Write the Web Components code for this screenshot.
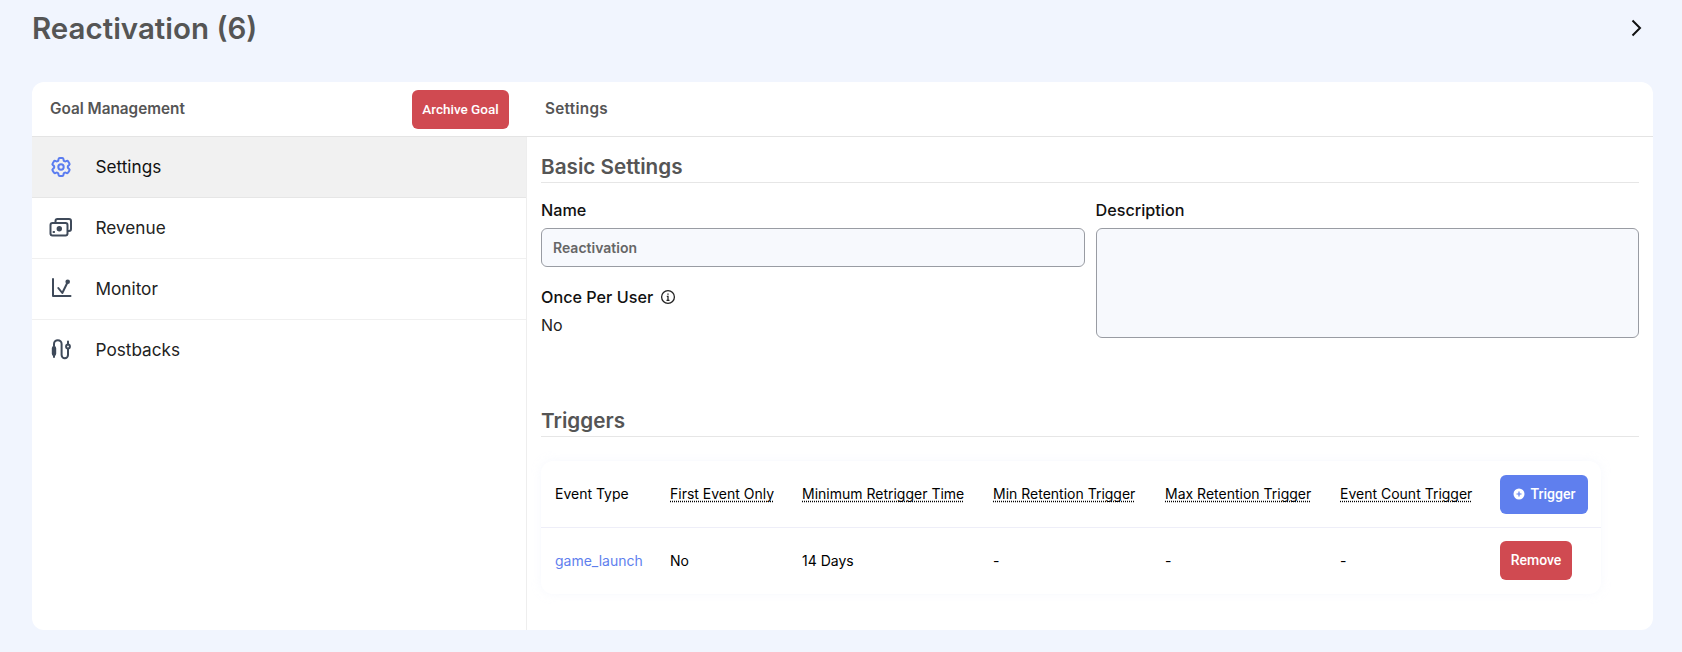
<!DOCTYPE html>
<html>
<head>
<meta charset="utf-8">
<title>Reactivation</title>
<style>
html, body { margin: 0; background: #f1f5fe; }
body { font-family: Inter, "Liberation Sans", sans-serif; width: 1682px; height: 652px; overflow: hidden; }
</style>
</head>
<body>
<goal-page>
    <page-title slot="title">Reactivation (6)</page-title>
    <goal-card>
        <card-bar slot="bar"></card-bar>
        <side-nav slot="nav">
            <nav-item icon="gear" active>Settings</nav-item>
            <nav-item icon="cash">Revenue</nav-item>
            <nav-item icon="chart">Monitor</nav-item>
            <nav-item icon="cable" last>Postbacks</nav-item>
        </side-nav>
        <basic-settings></basic-settings>
        <section-title style="margin-top:68px">Triggers</section-title>
        <trigger-table></trigger-table>
    </goal-card>
</goal-page>

<script>
const ICONS = {
    gear: `<path d="M9.594 3.940c.09-.542.56-.94 1.110-.94h2.593c.55 0 1.020.398 1.110.94l.213 1.281c.063.374.313.686.645.87.074.04.147.083.22.127.325.196.72.257 1.075.124l1.217-.456a1.125 1.125 0 0 1 1.370.49l1.296 2.247a1.125 1.125 0 0 1-.26 1.431l-1.003.827c-.293.241-.438.613-.43.992a7.723 7.723 0 0 1 0 .255c-.008.378.137.75.43.991l1.004.827c.424.35.534.955.26 1.430l-1.298 2.247a1.125 1.125 0 0 1-1.369.491l-1.217-.456c-.355-.133-.75-.072-1.076.124a6.470 6.470 0 0 1-.22.128c-.331.183-.581.495-.644.869l-.213 1.281c-.09.543-.56.94-1.110.94h-2.594c-.55 0-1.019-.398-1.110-.94l-.213-1.281c-.062-.374-.312-.686-.644-.87a6.520 6.520 0 0 1-.22-.127c-.325-.196-.72-.257-1.076-.124l-1.217.456a1.125 1.125 0 0 1-1.369-.49l-1.297-2.247a1.125 1.125 0 0 1 .26-1.431l1.004-.827c.292-.24.437-.613.43-.991a6.932 6.932 0 0 1 0-.255c.007-.38-.138-.751-.43-.992l-1.004-.827a1.125 1.125 0 0 1-.26-1.430l1.297-2.247a1.125 1.125 0 0 1 1.370-.491l1.216.456c.356.133.751.072 1.076-.124.072-.044.146-.086.22-.128.332-.183.582-.495.644-.869l.214-1.280Z"/><path d="M14.700 12a2.700 2.700 0 1 1-5.400 0 2.700 2.700 0 0 1 5.400 0Z"/>`,
    cash: `<path d="M6.500 7V5a2 2 0 0 1 2-2H20a2 2 0 0 1 2 2v8a2 2 0 0 1-2 2h-1"/><rect x="1.500" y="7" width="17" height="12.500" rx="2"/><circle cx="10.300" cy="12.800" r="1.700" fill="currentColor"/><path d="M4.500 16h.6"/>`,
    chart: `<path d="M4 2v17h17.500"/><path d="M9.300 11l4 5 5.400-11"/><circle cx="18.700" cy="4.700" r="1.300" fill="currentColor"/>`,
    cable: `<path d="M5 8V6a3.800 3.800 0 0 1 7.600 0v11a3.200 3.200 0 0 0 6.400 0v-6"/><rect x="3.800" y="9" width="2.400" height="8" rx="1.200" fill="currentColor"/><circle cx="19" cy="8.500" r="1.900"/><path d="M5 17v2M19 3.500v3"/>`
};

class GoalPage extends HTMLElement {
    connectedCallback() {
        this.attachShadow({mode: 'open'});
        this.shadowRoot.innerHTML = `
        <style>
        :host { display: block; padding: 0 29px 23px 32px; }
        header {
            display: flex;
            align-items: center;
            justify-content: space-between;
            height: 56px;
            margin-bottom: 26px;
        }
        svg { margin-right: 5px; }
        </style>
        <header>
            <slot name="title"></slot>
            <svg width="24" height="24" viewBox="0 0 24 24" fill="none" stroke="#111" stroke-width="2"><path d="M8.500 4.500 16 12l-7.500 7.500"/></svg>
        </header>
        <slot></slot>
        `;
    }
}

class PageTitle extends HTMLElement {
    connectedCallback() {
        this.attachShadow({mode: 'open'});
        this.shadowRoot.innerHTML = `
        <style>
        :host { display: block; font-size: 29.500px; font-weight: 600; color: #555; }
        </style>
        <slot></slot>
        `;
    }
}

class GoalCard extends HTMLElement {
    connectedCallback() {
        this.attachShadow({mode: 'open'});
        this.shadowRoot.innerHTML = `
        <style>
        :host {
            display: block;
            height: 548px;
            background: #fff;
            border-radius: 12px;
            overflow: hidden;
        }
        .body { display: grid; grid-template-columns: 494px 1fr; height: 493px; }
        .main { border-left: 1px solid #eee; padding: 15px 14px 0 14px; }
        </style>
        <slot name="bar"></slot>
        <div class="body">
            <slot name="nav"></slot>
            <div class="main"><slot></slot></div>
        </div>
        `;
    }
}

class CardBar extends HTMLElement {
    connectedCallback() {
        this.attachShadow({mode: 'open'});
        this.shadowRoot.innerHTML = `
        <style>
        :host {
            display: grid;
            grid-template-columns: 362px auto 1fr;
            align-items: center;
            height: 54px;
            border-bottom: 1px solid #e4e4e4;
            padding-left: 18px;
            font-size: 15.300px;
            font-weight: 600;
            color: #555;
        }
        span { margin-bottom: 2px; }
        span:last-child { margin-left: 36px; letter-spacing: .3px; }
        </style>
        <span>Goal Management</span>
        <ui-button color="#d04a51" w="97" size="13.500">Archive Goal</ui-button>
        <span>Settings</span>
        `;
    }
}

class SideNav extends HTMLElement {
    connectedCallback() {
        this.attachShadow({mode: 'open'});
        this.shadowRoot.innerHTML = `
        <style>
        :host { display: block; }
        </style>
        <slot></slot>
        `;
    }
}

class NavItem extends HTMLElement {
    connectedCallback() {
        this.attachShadow({mode: 'open'});
        const active = this.hasAttribute('active');
        const border = this.hasAttribute('last') ? 'transparent' : active ? '#e6e6e6' : '#f0f0f0';
        this.shadowRoot.innerHTML = `
        <style>
        :host {
            display: flex;
            align-items: center;
            height: 60px;
            border-bottom: 1px solid ${border};
            background: ${active ? '#f1f1f1' : '#fff'};
            color: ${active ? '#111' : '#222'};
            font-size: 17.200px;
            padding-left: 17px;
        }
        svg { color: ${active ? '#5a7cf0' : '#3f4a5a'}; margin-right: 22.500px; }
        span { margin-bottom: 2px; }
        </style>
        <svg width="24" height="24" viewBox="0 0 24 24" fill="none" stroke="currentColor" stroke-width="2" stroke-linecap="round" stroke-linejoin="round">${ICONS[this.getAttribute('icon')]}</svg>
        <span><slot></slot></span>
        `;
    }
}

class SectionTitle extends HTMLElement {
    connectedCallback() {
        this.attachShadow({mode: 'open'});
        this.shadowRoot.innerHTML = `
        <style>
        :host {
            display: block;
            font-size: 20.700px;
            font-weight: 600;
            color: #555;
            line-height: 30px;
            border-bottom: 1px solid #e6e6e6;
        }
        </style>
        <slot></slot>
        `;
    }
}

class BasicSettings extends HTMLElement {
    connectedCallback() {
        this.attachShadow({mode: 'open'});
        this.shadowRoot.innerHTML = `
        <style>
        :host { display: block; }
        .cols { display: grid; grid-template-columns: 1fr 1fr; gap: 11px; margin-top: 16px; }
        label { display: flex; align-items: center; gap: 7px; font-size: 16.200px; font-weight: 500; color: #111; height: 22px; margin-bottom: 7px; }
        .box {
            box-sizing: border-box;
            background: #f7f9fd;
            border: 1px solid #999ca3;
            border-radius: 6px;
            font-size: 14px;
            font-weight: 600;
            color: #666;
            padding: 0 11px;
        }
        .input { height: 39px; line-height: 37px; }
        .area { height: 110px; }
        .once { margin-top: 19px; }
        .value { font-size: 16px; color: #222; margin-top: 7px; }
        </style>
        <section-title>Basic Settings</section-title>
        <div class="cols">
            <div>
                <label>Name</label>
                <div class="box input">Reactivation</div>
                <label class="once">Once Per User
                    <svg width="16" height="16" viewBox="0 0 16 16" fill="none" stroke="#222" stroke-width="1.300"><circle cx="8" cy="8" r="6.400"/><path d="M6.800 7.300H8v4M6.500 11.300h3M8 4.400v1.300"/></svg>
                </label>
                <div class="value">No</div>
            </div>
            <div>
                <label>Description</label>
                <div class="box area"></div>
            </div>
        </div>
        `;
    }
}

class TriggerTable extends HTMLElement {
    connectedCallback() {
        this.attachShadow({mode: 'open'});
        this.shadowRoot.innerHTML = `
        <style>
        :host {
            display: block;
            margin: 24px 38px 0 0;
            border-radius: 12px;
            box-shadow: 0 0 10px rgba(230, 234, 248, .35);
            font-size: 14px;
            color: #000;
        }
        table { border-collapse: collapse; table-layout: fixed; width: 100%; }
        th, td { text-align: left; font-weight: 400; padding: 0 0 2px 14px; }
        th { height: 64px; border-bottom: 1px solid #eeeef8; }
        td { height: 64px; }
        th.act, td.act { padding-bottom: 0; }
        th span {
            text-decoration: underline dotted;
            text-underline-offset: 2px;
            text-decoration-skip-ink: none;
        }
        td ui-button { margin-bottom: 2px; }
        a { color: #5f7fee; text-decoration: none; }
        </style>
        <table>
            <colgroup>
                <col style="width:115px"><col style="width:132px"><col style="width:191px">
                <col style="width:172px"><col style="width:175px"><col style="width:160px"><col>
            </colgroup>
            <tr>
                <th>Event Type</th>
                <th><span>First Event Only</span></th>
                <th><span>Minimum Retrigger Time</span></th>
                <th><span>Min Retention Trigger</span></th>
                <th><span>Max Retention Trigger</span></th>
                <th><span>Event Count Trigger</span></th>
                <th class="act"><ui-button color="#5f7fee" w="88" plus>Trigger</ui-button></th>
            </tr>
            <tr>
                <td><a href="#">game_launch</a></td>
                <td>No</td>
                <td>14 Days</td>
                <td>-</td>
                <td>-</td>
                <td>-</td>
                <td class="act"><ui-button color="#d04a51" w="72">Remove</ui-button></td>
            </tr>
        </table>
        `;
    }
}

class UiButton extends HTMLElement {
    connectedCallback() {
        this.attachShadow({mode: 'open'});
        const plus = this.hasAttribute('plus') ? `<svg width="12" height="12" viewBox="0 0 12 12"><circle cx="6" cy="6" r="5.500" fill="#fff"/><path d="M3.500 6h5M6 3.500v5" stroke="${this.getAttribute('color')}" stroke-width="1.200"/></svg>` : '';
        this.shadowRoot.innerHTML = `
        <style>
        :host {
            display: inline-flex;
            align-items: center;
            justify-content: center;
            gap: 6px;
            box-sizing: border-box;
            width: ${this.getAttribute('w')}px;
            height: 39px;
            border-radius: 6px;
            background: ${this.getAttribute('color')};
            color: #fff;
            font-family: Roboto, sans-serif;
            font-size: ${this.getAttribute('size') || 14}px;
            font-weight: 500;
        }
        </style>
        ${plus}<slot></slot>
        `;
    }
}

customElements.define('goal-page', GoalPage);
customElements.define('page-title', PageTitle);
customElements.define('goal-card', GoalCard);
customElements.define('card-bar', CardBar);
customElements.define('side-nav', SideNav);
customElements.define('nav-item', NavItem);
customElements.define('section-title', SectionTitle);
customElements.define('basic-settings', BasicSettings);
customElements.define('trigger-table', TriggerTable);
customElements.define('ui-button', UiButton);
</script>
</body>
</html>
